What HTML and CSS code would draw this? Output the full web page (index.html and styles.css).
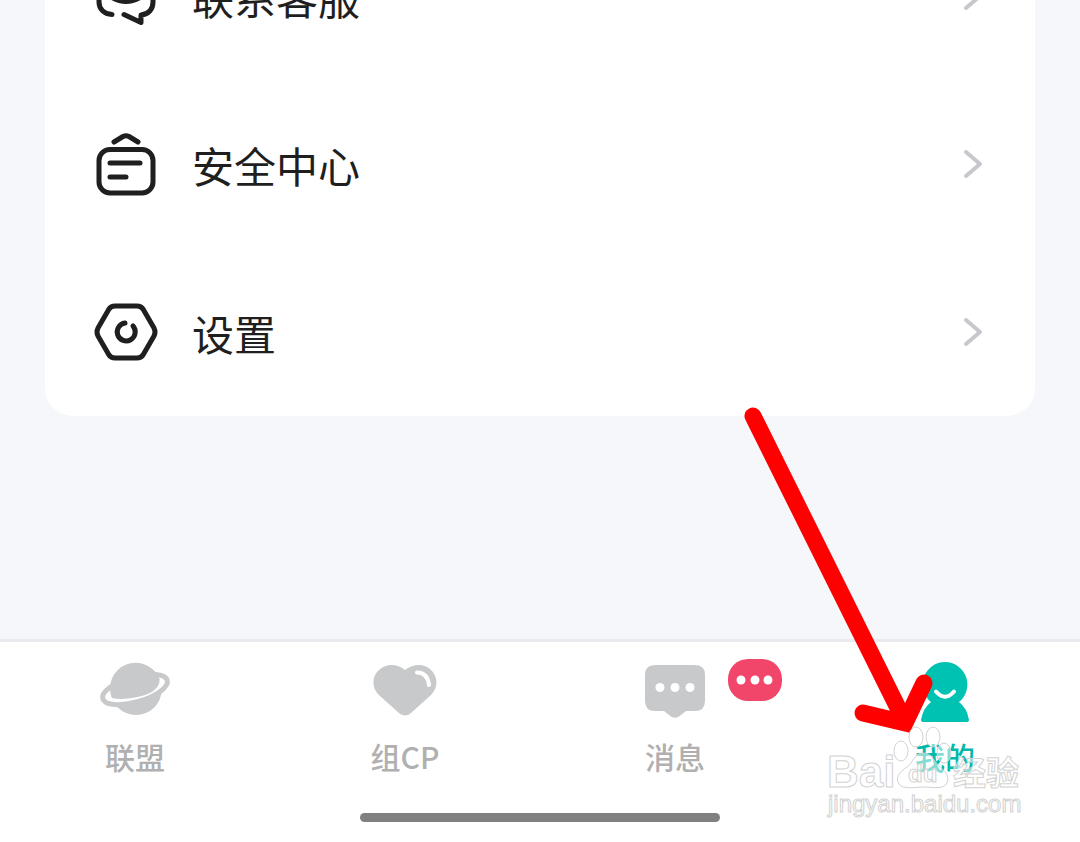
FILE: index.html
```
<!DOCTYPE html>
<html lang="zh-CN">
<head>
<meta charset="utf-8">
<meta name="viewport" content="width=device-width, initial-scale=1">
<title>我的</title>
<link rel="stylesheet" href="styles.css">
</head>
<body>
<main class="content">
  <div class="card">
    <a class="row" href="#service">
      <svg class="row-icon" viewBox="0 0 68 68" aria-hidden="true">
        <path d="M20 52.500C12 52 7 47 7 40V25C7 16 12 12 20 12H48C56 12 61 17 61 25V40C61 47 57 52 49 53L49 60.500L32 52.500"/>
        <path d="M20 35.500Q34 43.500 48 35.500"/>
      </svg>
      <span class="row-label">联系客服</span>
      <svg class="chevron" viewBox="0 0 24 34" aria-hidden="true"><path d="M5 5L19 17L5 29"/></svg>
    </a>
    <a class="row" href="#security">
      <svg class="row-icon" viewBox="0 0 68 68" aria-hidden="true">
        <rect x="7" y="19.500" width="54" height="43.500" rx="11"/>
        <path d="M22 12L31 6.500Q34 5 37 6.500L46 12M18 33H48M18 47H34"/>
      </svg>
      <span class="row-label">安全中心</span>
      <svg class="chevron" viewBox="0 0 24 34" aria-hidden="true"><path d="M5 5L19 17L5 29"/></svg>
    </a>
    <a class="row" href="#settings">
      <svg class="row-icon" viewBox="0 0 68 68" aria-hidden="true">
        <path d="M23 8H45Q49 8 51 11L62 30Q64 34 62 38L51 57Q49 60 45 60H23Q19 60 17 57L6 38Q4 34 6 30L17 11Q19 8 23 8Z"/>
        <path d="M33 25A9 9 0 1 0 41 28"/>
      </svg>
      <span class="row-label">设置</span>
      <svg class="chevron" viewBox="0 0 24 34" aria-hidden="true"><path d="M5 5L19 17L5 29"/></svg>
    </a>
  </div>
</main>

<footer class="footer">
  <nav class="tabs">
    <a class="tab" href="#union">
      <svg class="tab-icon" viewBox="0 0 80 64" aria-hidden="true">
        <circle class="fill" cx="41" cy="29.300" r="25.700"/>
        <ellipse class="ring" cx="40" cy="29.500" rx="33.500" ry="12.500" transform="rotate(-16 40 29.500)"/>
        <path class="fill" d="M16.800 38A25.700 25.700 0 0 1 64.600 19Q65 33 40 37.500Q27 40 16.800 38Z"/>
      </svg>
      <span>联盟</span>
    </a>
    <a class="tab" href="#cp">
      <svg class="tab-icon" viewBox="0 0 80 64" aria-hidden="true">
        <path class="fill" d="M40 10C48 4 58 3 65 9C73 16 74 27 66 35L46 53Q40 58 34 53L15 36C6 28 7 16 14 10C22 3 32 4 40 10Z"/>
        <path class="shine" d="M52 12.500Q63 13 64 25"/>
      </svg>
      <span>组CP</span>
    </a>
    <a class="tab" href="#messages">
      <svg class="tab-icon" viewBox="0 0 80 64" aria-hidden="true">
        <path class="fill" d="M20 5H60Q70 5 70 15V41Q70 51 60 51H51L44 56.500Q40 59 36 56.500L29 51H20Q10 51 10 41V15Q10 5 20 5Z"/>
        <g class="dots"><circle cx="25" cy="27.500" r="4.500"/><circle cx="40" cy="27.500" r="4.500"/><circle cx="55" cy="27.500" r="4.500"/></g>
      </svg>
      <span>消息</span>
      <svg class="badge" viewBox="0 0 54 42" role="img" aria-label="新消息">
        <rect width="54" height="42" rx="20"/>
        <g class="dots"><circle cx="13" cy="21" r="4.500"/><circle cx="27" cy="21" r="4.500"/><circle cx="40" cy="21" r="4.500"/></g>
      </svg>
    </a>
    <a class="tab tab-active" href="#me" aria-current="page">
      <svg class="tab-icon" viewBox="0 0 80 64" aria-hidden="true">
        <path class="fill" d="M40 2A22.500 22.500 0 0 1 54 42Q62 48 64 60Q64 62 62 62H18Q16 62 16 60Q18 48 26 42A22.500 22.500 0 0 1 40 2Z"/>
        <path class="smile" d="M31 31.500Q40 42 49 31.500"/>
      </svg>
      <span>我的</span>
    </a>
  </nav>
  <div class="home-bar"></div>
</footer>

<svg class="arrow" viewBox="0 0 200 340" aria-hidden="true">
  <path d="M13 16L165 322"/>
  <path d="M123 313L165 323L184 283"/>
</svg>

<svg class="watermark" viewBox="0 0 200 100" role="img" aria-label="Baidu经验 jingyan.baidu.com">
  <g class="mark">
    <ellipse cx="77" cy="25" rx="7" ry="10"/>
    <ellipse cx="92" cy="11" rx="7" ry="10"/>
    <ellipse cx="109" cy="11" rx="7" ry="10"/>
    <ellipse cx="120" cy="27" rx="7" ry="10"/>
    <path d="M99 27C90 27 90 36 83 41C75 46 71 52 75 58C79 64 92 61 99 61C107 61 120 64 123 57C126 50 121 45 114 39C109 34 108 27 99 27Z"/>
    <text class="latin" x="3" y="61">Bai</text>
    <text class="du" x="84" y="56">du</text>
    <text class="han" x="129" y="59">经验</text>
    <text class="site" x="4" y="86">jingyan.baidu.com</text>
  </g>
</svg>
</body>
</html>
```
FILE: styles.css
```
* {
  box-sizing: border-box;
}

body {
  margin: 0;
  height: 100vh;
  position: relative;
  display: flex;
  flex-direction: column;
  overflow: hidden;
  background: #f5f7fb;
  color: #1f1f1f;
  font-family: "Noto Sans CJK SC", "Noto Sans", sans-serif;
}

a {
  color: inherit;
  text-decoration: none;
}

svg {
  display: block;
  flex: none;
}

.content {
  flex: 1;
  min-height: 0;
  display: flex;
  flex-direction: column;
  justify-content: flex-end;
  padding: 0 45px 223px;
}

.card {
  background: #fff;
  border-radius: 28px;
}

.row {
  height: 168px;
  display: flex;
  align-items: center;
  gap: 32px;
  padding: 0 50px 0 47px;
}

.row-icon {
  width: 68px;
  height: 68px;
  fill: none;
  stroke: #1f1f1f;
  stroke-width: 5;
  stroke-linecap: round;
  stroke-linejoin: round;
}

.row-label {
  flex: 1;
  padding-top: 2px;
  font-size: 42px;
  line-height: 60px;
}

.chevron {
  width: 24px;
  height: 34px;
  fill: none;
  stroke: #c8c8cc;
  stroke-width: 4;
  stroke-linecap: round;
  stroke-linejoin: round;
}

.footer {
  background: #fff;
  border-top: 3px solid #e9eaed;
  padding: 18px 0 20px;
}

.tabs {
  display: grid;
  grid-template-columns: repeat(4, 1fr);
  padding-bottom: 35px;
}

.tab {
  position: relative;
  display: flex;
  flex-direction: column;
  align-items: center;
  gap: 10px;
  color: #b0b0b0;
  font-size: 30px;
  font-weight: 500;
  line-height: 44px;
}

.tab-icon {
  width: 80px;
  height: 64px;
}

.fill {
  fill: #c8c9cb;
}

.ring {
  fill: #fff;
  stroke: #c8c9cb;
  stroke-width: 5;
}

.shine,
.smile {
  fill: none;
  stroke: #fff;
  stroke-width: 4;
  stroke-linecap: round;
}

.dots {
  fill: #fff;
}

.tab-active {
  color: #00b9aa;
}

.tab-active .fill {
  fill: #00c2b3;
}

.badge {
  position: absolute;
  top: -1px;
  left: calc(50% + 53px);
  width: 54px;
  height: 42px;
  fill: #f2456a;
}

.home-bar {
  width: 33.3333%;
  height: 9px;
  margin: 0 auto;
  border-radius: 5px;
  background: #808080;
}

.arrow {
  position: absolute;
  right: 140px;
  bottom: 102px;
  width: 200px;
  height: 340px;
  fill: none;
  stroke: #f00;
  stroke-width: 17;
  stroke-linecap: round;
  stroke-linejoin: miter;
}

.watermark {
  position: absolute;
  right: 56px;
  bottom: 16px;
  width: 200px;
  height: 100px;
  overflow: visible;
}

.mark {
  fill: #fff;
  fill-opacity: 0.5;
  stroke: #d2d2d2;
  stroke-width: 1;
  font-family: "Liberation Sans", sans-serif;
}

.latin {
  font-size: 44px;
  font-weight: bold;
}

.du {
  font-size: 24px;
  font-weight: bold;
}

.han {
  font-family: "Noto Sans CJK SC", sans-serif;
  font-size: 33px;
  font-weight: bold;
}

.site {
  font-size: 24px;
}
```
